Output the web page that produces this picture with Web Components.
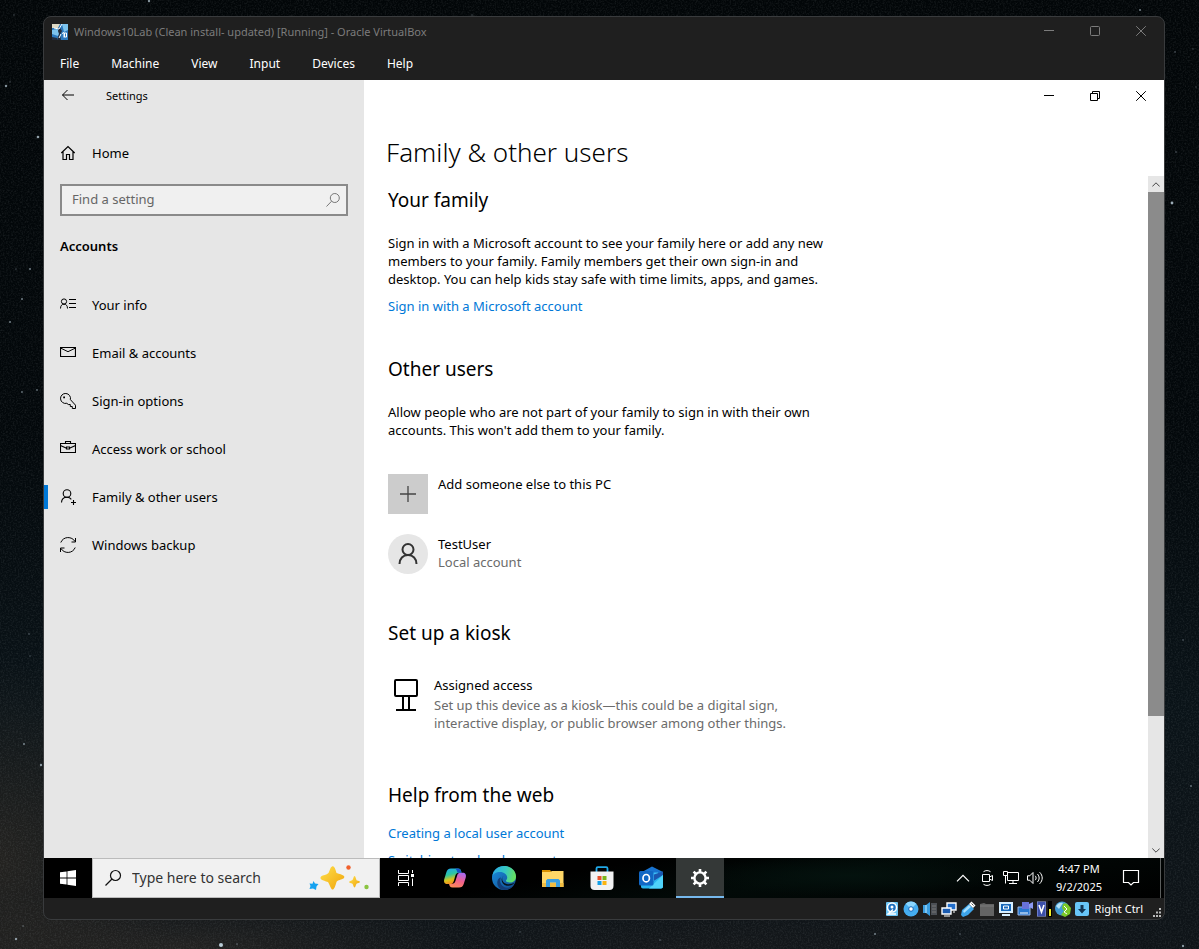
<!DOCTYPE html>
<html lang="en">
<head>
<meta charset="utf-8">
<meta name="viewport" content="width=device-width, initial-scale=1">
<title>Windows10Lab - Oracle VirtualBox</title>
<style>
  html, body { margin: 0; height: 100%; }
  body { font: 13px/18px "Noto Sans", "Open Sans", sans-serif; color: #000; background: #05090c; overflow: hidden; }
</style>
</head>
<body>
<host-desktop>
  <vm-window caption="Windows10Lab (Clean install- updated) [Running] - Oracle VirtualBox">
    <menu-strip slot="menu" items="File,Machine,View,Input,Devices,Help"></menu-strip>
    <settings-app>
      <nav-item slot="home" icon="home">Home</nav-item>
      <nav-item slot="nav" icon="info">Your info</nav-item>
      <nav-item slot="nav" icon="mail">Email &amp; accounts</nav-item>
      <nav-item slot="nav" icon="key">Sign-in options</nav-item>
      <nav-item slot="nav" icon="case">Access work or school</nav-item>
      <nav-item slot="nav" icon="family" current>Family &amp; other users</nav-item>
      <nav-item slot="nav" icon="sync">Windows backup</nav-item>

      <settings-group heading="Your family">
        <settings-note>Sign in with a Microsoft account to see your family here or add any new members to your family. Family members get their own sign-in and desktop. You can help kids stay safe with time limits, apps, and games.</settings-note>
        <settings-link>Sign in with a Microsoft account</settings-link>
      </settings-group>
      <settings-group heading="Other users">
        <settings-note>Allow people who are not part of your family to sign in with their own accounts. This won't add them to your family.</settings-note>
        <account-list>
          <account-entry kind="add" icon="plus">Add someone else to this PC</account-entry>
          <account-entry kind="user" icon="person">TestUser<span slot="detail">Local account</span></account-entry>
        </account-list>
      </settings-group>
      <settings-group heading="Set up a kiosk">
        <account-entry kind="kiosk" icon="kiosk">Assigned access<span slot="detail">Set up this device as a kiosk—this could be a digital sign, interactive display, or public browser among other things.</span></account-entry>
      </settings-group>
      <settings-group heading="Help from the web" compact>
        <settings-link>Creating a local user account</settings-link>
        <settings-link>Switching to a local account</settings-link>
      </settings-group>
    </settings-app>
    <task-bar>
      <task-button icon="taskview" label="Task View"></task-button>
      <task-button icon="copilot" label="Copilot"></task-button>
      <task-button icon="edge" label="Microsoft Edge"></task-button>
      <task-button icon="files" label="File Explorer"></task-button>
      <task-button icon="store" label="Microsoft Store"></task-button>
      <task-button icon="outlook" label="Outlook"></task-button>
      <task-button icon="gear" label="Settings" active></task-button>
    </task-bar>
    <vm-status slot="status"></vm-status>
  </vm-window>
</host-desktop>

<script>
const S = 'fill="none" stroke="currentColor"';
const ICONS = {
  min: [10, 10, `<path d="M0 4.500h10" ${S}/>`],
  max: [10, 10, `<rect x=".5" y=".5" width="9" height="9" rx="1" ${S}/>`],
  restore: [10, 10, `<path d="M.5 2.500h7v7h-7zM2.500 2.500v-2h7v7h-2" ${S}/>`],
  close: [10, 10, `<path d="M.2.2l9.600 9.600M9.800.2L.2 9.800" ${S}/>`],
  back: [14, 12, `<path d="M13 6H1.500M6.500 1L1.500 6l5 5" ${S}/>`],
  home: [16, 16, `<path d="M1.300 8L8 1.500 14.700 8M3 6.800v7.700h3.500v-5h3v5H13V6.800" ${S} stroke-width="1.200"/>`],
  search: [16, 16, `<circle cx="9.800" cy="6" r="4.500" ${S}/><path d="M6.600 9.200L1.500 14.500" ${S}/>`],
  lens: [18, 18, `<circle cx="11.500" cy="6.500" r="5" ${S} stroke-width="1.200"/><path d="M8 10L1.500 16.500" ${S} stroke-width="1.200"/>`],
  info: [16, 16, `<circle cx="4" cy="4.500" r="2.600" ${S}/><path d="M.5 11.500c0-3 1.500-4.300 3.500-4.300s3.500 1.300 3.500 4.300M9 2.500h7M9 6.500h7M9 10.500h7" ${S}/>`],
  mail: [16, 16, `<path d="M.5 2.500h15v9H.5z" ${S} stroke-width="1.200"/><path d="M.5 3L8 6.700 15.500 3" ${S}/>`],
  key: [16, 16, `<path d="M6.800 10.300A5 5 0 1 1 10.400 6.600l5.100 5.600v3.300h-3.200v-2h-2v-2H8.300l-1.500-1.200z" ${S}/><path d="M3.200 3.500h1.800v1.800h-1.800z" fill="currentColor"/>`],
  case: [16, 16, `<path d="M.5 2.500h15v9H.5zM5.500 2.500v-2h5v2M.5 4.500L6 7M15.500 4.500L10 7M6.500 6h3v2h-3z" ${S} stroke-width="1.100"/>`],
  family: [16, 16, `<circle cx="7" cy="4.500" r="3.800" ${S} stroke-width="1.100"/><path d="M1.500 13.500c.1-3.200 2.300-5.200 5.500-5.200 1.800 0 3.400.8 4.300 2M13.500 11v5M11 13.500h5" ${S} stroke-width="1.100"/>`],
  sync: [16, 16, `<path d="M.8 5.500C3.300-.9 12-.9 15 4.500M15.500 1v4h-4M15.200 10.500C12.700 16.900 4 16.900 1 11.500M.5 15v-4h4" ${S}/>`],
  plus: [16, 16, `<path d="M8 0v16M0 8h16" fill="none" stroke="#444" stroke-width="1.300"/>`],
  person: [20, 22, `<circle cx="10" cy="6.500" r="5.500" fill="none" stroke="#333" stroke-width="2"/><path d="M1.500 21c0-5.500 3.500-9 8.500-9s8.500 3.500 8.500 9" fill="none" stroke="#333" stroke-width="2"/>`],
  kiosk: [24, 32, `<rect x="1" y="1" width="22" height="16" rx="1" ${S} stroke-width="2"/><path d="M9 17v14M15 17v14M2 31h20" ${S} stroke-width="2"/>`],
  up: [8, 5, `<path d="M.3 4.500L4 .8l3.700 3.700" ${S}/>`],
  down: [8, 5, `<path d="M.3.5L4 4.200 7.700.5" ${S}/>`],
  start: [16, 16, `<path fill="#fff" d="M0 2.300L6.600 1.400v6.200H0zM7.400 1.300L16 0v7.600H7.400zM0 8.400h6.600v6.200L0 13.700zM7.400 8.400H16V16l-8.600-1.300z"/>`],
  sparkle: [62, 28, `<defs><linearGradient id="s" x1="0" y1="0" x2="1" y2="1"><stop stop-color="#ffe04a"/><stop offset="1" stop-color="#f0a30a"/></linearGradient></defs><path fill="url(#s)" d="M24 2.500c2-1 3 1 4.500 6.500 6.500 2 9.500 3 7 5.500-1.500 1-6 1.500-7 3.500-1.500 5.500-3 9-5 7-1.500-2-2-5-3.500-7-5.500-1.500-9-3-7-5.500 2-1.500 5.500-1.500 7.500-3.500 1.500-2.500 1.500-5.500 3.500-6.500z"/><path fill="url(#s)" d="M46.500 12c1 0 1.500 3 2 4.200 2 .7 3.500 1 3.500 1.800s-2.500 1-3.500 1.800c-1 1.700-1 3.700-2 3.700s-1.200-2.500-2-3.700c-1.500-.8-3.500-1-3.500-1.800s2.500-1 3.500-2c1-1.500 1-4 2-4z"/><path fill="#16a2f0" d="M5.500 17l1.500 2.500 3.500.5-2 2.500-.5 3.500-3-1.500-3.500.5 1-3-1-2.500 3 .2z"/><circle cx="40.500" cy="3.500" r="2.200" fill="#f1602c"/><circle cx="58.500" cy="23" r="2.200" fill="#8ac441"/>`],
  taskview: [18, 16, `<path d="M1.500 0v3.500h10V0M1.500 16v-3.500h10V16M1.500 5.500h10v5h-10zM15.500 0v3M15.500 8.500V16" fill="none" stroke="#fff"/><path fill="#fff" d="M14 4h3v3h-3z"/>`],
  copilot: [24, 24, `<defs><linearGradient id="a" x1="0" y1="0" x2=".3" y2="1"><stop stop-color="#1fa6f5"/><stop offset=".45" stop-color="#2ec6a0"/><stop offset=".75" stop-color="#d8c51c"/><stop offset="1" stop-color="#f58b1f"/></linearGradient><linearGradient id="b" x1=".7" y1="0" x2=".3" y2="1"><stop stop-color="#a869f2"/><stop offset=".5" stop-color="#f0608e"/><stop offset="1" stop-color="#fd8a57"/></linearGradient></defs><path d="M16 21.500H9.500c-2.500 0-3-1.500-3.500-3.700h3c2 0 3-1 3.500-3L14 10c.6-2.200 1.500-3.300 3.500-3.300h2c3 0 4 2 3.200 5l-2 6.300c-.7 2.500-2.200 3.500-4.700 3.500z" fill="url(#b)"/><path d="M8 2.500h7c2.500 0 3 1.500 3.500 4.200H16c-2 0-3.200 1-3.700 3l-1.500 5.300C10 17.500 9 18 7 18H4.500C1.500 18 .5 16 1.300 13l2-6.500C4 4 5.500 2.500 8 2.500z" fill="url(#a)"/><path d="M14 2.500c2.800 0 4 1 4.500 4.200h-4c-.7-1.700-1-4.200-3-4.200z" fill="#1353c7"/>`],
  edge: [24, 24, `<defs><linearGradient id="c" x1="0" y1=".2" x2="1" y2=".4"><stop stop-color="#2aa9e6"/><stop offset=".55" stop-color="#36c8c2"/><stop offset="1" stop-color="#66e060"/></linearGradient><linearGradient id="d" x1="0" y1="0" x2="1" y2="1"><stop stop-color="#1a8fe0"/><stop offset="1" stop-color="#114a8b"/></linearGradient></defs><circle cx="12" cy="12" r="12" fill="url(#d)"/><path d="M.2 10.500C1.200 4 6 0 12 0c7 0 12 5 12 10.500 0 4-3 6-6 6-2.700 0-4.300-1-4-2 .2-.6 1.200-1.200 1.200-3C15.200 8.500 12 6 8 6S1 8 .2 10.500z" fill="url(#c)"/><path d="M9 11.500c-2 4 0 9 4.800 10 3.700.8 6.700-.8 8.600-3.200C20 22.500 16 24 12.500 24 7 24 4.500 19 5.500 15c.6-2.300 2-3.300 3.500-3.500z" fill="#143e78"/><path d="M11.500 10c-2.500 2-1.500 7 3.300 8 3 .6 5.400-.2 7.700-1.500-1.500 2.500-4.500 3.800-7.700 3.200C9.500 18.700 8 13 11.500 10z" fill="#08131c"/>`],
  files: [24, 24, `<path d="M1 4h8l2 2.500H1z" fill="#d99100"/><path d="M1 6h8.500l1.500-1h11.500V21H1z" fill="#ffd767"/><path d="M1 17h21.500v4H1z" fill="#f2bd42"/><path d="M5 14.500L6.500 13h11l1.500 1.500V21h-4v-4.500H9V21H5z" fill="#3a9fe2"/>`],
  store: [24, 24, `<path d="M6.500 7V2.500C6.500 1.700 7 1.200 7.800 1.200h8.400c.8 0 1.300.5 1.300 1.300V7" fill="none" stroke="#20a9e8" stroke-width="1.800"/><path d="M.5 5.500h23V20c0 2.500-1.500 4-4 4h-15c-2.500 0-4-1.500-4-4z" fill="#f2f2f2"/><path d="M7.500 10h4v4h-4z" fill="#e8502a"/><path d="M12.500 10h4v4h-4z" fill="#7bb61a"/><path d="M7.500 15h4v4h-4z" fill="#13a0e8"/><path d="M12.500 15h4v4h-4z" fill="#fbb40f"/>`],
  outlook: [24, 24, `<path d="M3 6l10-5.500L24 6v4H3z" fill="#1873cf"/><path d="M5 6.500h14V15H5z" fill="#3dbdf5"/><path d="M15 8.500l9-3v8l-9 4z" fill="#1b57b0"/><path d="M2 10.500l11 5.500 11-7v11.500c0 1.200-.8 2-2 2H4c-1.200 0-2-.8-2-2z" fill="#28b4ee"/><path d="M10 22.500L24 9v11.500c0 1.200-.8 2-2 2z" fill="#4fd3fa"/><rect y="5" width="14.500" height="14.500" rx="1.500" fill="#1167c4"/><ellipse cx="7.200" cy="12.200" rx="3.200" ry="3.700" fill="none" stroke="#fff" stroke-width="1.700"/>`],
  gear: [20, 20, `<circle cx="10" cy="10" r="5.600" fill="none" stroke="#fff" stroke-width="2.400"/><path d="M10 1v3.500M10 15.500V19M1 10h3.500M15.500 10H19M3.600 3.600l2.600 2.600M13.800 13.800l2.600 2.600M16.400 3.600l-2.600 2.600M6.200 13.800l-2.600 2.600" stroke="#fff" stroke-width="2.600"/>`],
  chevron: [14, 8, `<path d="M1 7.300L7 1.300l6 6" fill="none" stroke="#fff" stroke-width="1.200"/>`],
  meet: [12, 16, `<path d="M1.500 4.500h7v7h-7zM8.500 7l3-1.500v5l-3-1.500M2.500 1.700c2-1.500 5-1.500 7 0M2.500 14.300c2 1.500 5 1.500 7 0" fill="none" stroke="#fff"/>`],
  network: [16, 14, `<path d="M4.500 1.500h11v8h-11zM10 9.500v3M6 12.500h8" fill="none" stroke="#fff"/><path d="M.5.5h4v4h-4zM2.500 4.500v8" fill="#000" stroke="#fff"/>`],
  sound: [18, 14, `<path d="M1.500 4.800h2.300L7 1.500v11L3.800 9.200H1.500zM9.200 4.800c1.200 1.300 1.200 3.100 0 4.400M11.400 3c2.300 2.400 2.300 5.600 0 8M13.600 1.200c3.500 3.500 3.500 8.100 0 11.600" fill="none" stroke="#fff"/>`],
  note: [18, 18, `<path d="M1.500 1.500h15v12h-5L9 16l-2.500-2.500h-5z" fill="none" stroke="#fff" stroke-width="1.200"/>`],
  vm: [16, 16, `<path fill="#2b78bd" d="M0 0h16v16H0z"/><path fill="#7cc4ee" d="M0 6l5-1 3 3-2 4-6-2zM10 0h6v6l-4 2z"/><path fill="#ddd8c4" d="M0 0h8L6 4H0z"/><path fill="#222d3c" d="M8 4l2 3-2 4 1 5H5l2-6-1-3 1-4zM0 13l5 1v2H0z"/><path fill="none" stroke="#fff" d="M10 0L7 5l-5-1M9 10l-2 4M10 9.500l2-1v5M12.500 9h2v4h-2z"/>`],
  disk: [16, 16, `<rect x="2" y="1" width="12" height="14" rx="1" fill="#6cc5f5"/><circle cx="8" cy="6.500" r="4.500" fill="#1c6fbe" stroke="#fff" stroke-width="1.500"/><circle cx="8" cy="6" r="1.500" fill="#fff"/><path d="M9 8.500L4 13h8" fill="none" stroke="#fff" stroke-width="1.500"/>`],
  disc: [16, 16, `<circle cx="8" cy="8" r="7.500" fill="#45adf0"/><path d="M8 8L2.700 2.700a7.500 7.500 0 0 1 10.600 0z" fill="#8bd6ff"/><circle cx="8" cy="8" r="2.300" fill="#fff" stroke="#1667b8"/>`],
  audio: [16, 16, `<path d="M1 4h3l4-3v14l-4-3H1z" fill="#3a9de0"/><path d="M4 4v8" stroke="#c1ebff"/><path d="M9 2h6v12H9z" fill="#4b4f55"/><path d="M10 5h4M10 8h4M10 11h4" stroke="#777"/>`],
  net: [16, 16, `<path d="M6 2h9v7H6z" fill="#226ecb" stroke="#fff" stroke-width="1.400"/><path d="M1 7h9v6H1z" fill="#1c5cb0" stroke="#fff" stroke-width="1.400"/><path d="M3 15h6M13 10v2" stroke="#fff"/>`],
  usb: [16, 16, `<path d="M2 9l7-6 5 5-6 6-5 2-2-2z" fill="#3da4e9"/><path d="M3 10l6-6 2 2-7 6z" fill="#a7e0ff"/><path d="M9 3l2.500-2.500 4 4L13 7z" fill="#fff"/><path d="M11.500 2.500l2 2" stroke="#555"/>`],
  folder: [16, 16, `<path d="M1 3l4-1 2 1h8v12H1z" fill="#646464"/><path d="M1 5h14" stroke="#7b7b7b"/>`],
  display: [16, 16, `<path d="M2 2h12v9H2z" fill="#1768ba" stroke="#d8efff" stroke-width="2"/><path d="M5.500 5h5v3h-5z" fill="#176abf" stroke="#fff"/><path d="M4 14h8" stroke="#d8efff" stroke-width="2"/>`],
  record: [16, 16, `<path d="M1 6h12v8H1z" fill="#2878cf" stroke="#9bb8e8"/><path d="M5 1h7v7H5z" fill="#6872d8"/><path d="M12 3l4-2v7l-4-2z" fill="#8d9af0"/><path d="M3 12h8" stroke="#fff"/>`],
  cpu: [16, 16, `<path d="M1 1h9v14H1z" fill="#3c50a9"/><path d="M1.500.5h8v15h-8z" fill="none" stroke="#9aa7ec" stroke-dasharray="1 1"/><path d="M3 4l2.500 7L8 4" fill="none" stroke="#fff" stroke-width="1.600"/><path d="M12 0h4v16h-4z" fill="#000"/><path d="M13 8h2v7h-2z" fill="#f3ec28"/>`],
  globe: [16, 16, `<circle cx="7" cy="7.500" r="7" fill="#429bd4"/><path d="M1 5c2-3 5-4 7-3L4 8z" fill="#b5e2f7"/><path d="M8 3c4-2 5 1 8 4l-1 6-5 3-4-2 3-4-2-3z" fill="#7bc927"/><path d="M9 5l3 3-3 3 3 2" fill="none" stroke="#fff"/>`],
  hostkey: [16, 16, `<rect x="1" y="1" width="14" height="14" rx="2" fill="#68c5f7"/><path d="M6.500 4h3v4H12l-4 4.500L4 8h2.500z" fill="#123554"/>`],
  grip: [9, 9, `<path d="M7 0h2v2H7zM4 3.500h2v2H4zM7 3.500h2v2H7zM1 7h2v2H1zM4 7h2v2H4zM7 7h2v2H7z" fill="#bbb"/>`]
};

const define = (name, html, setup) => {
  const template = document.createElement('template');
  template.innerHTML = html;
  customElements.define(name, class extends HTMLElement {
    connectedCallback() {
      if (this.shadowRoot) return;
      const root = this.attachShadow({ mode: 'open' });
      root.append(template.content.cloneNode(true));
      setup?.(this, root);
    }
  });
};

/* Night-sky wallpaper: a dark gradient, film grain and scattered stars. */
define('host-desktop', `<style>
  :host{display:flex;box-sizing:border-box;height:100vh;padding:16px 34px 29px 43px;position:relative;
    background:radial-gradient(ellipse 180px 200px at 0 860px,#332d2699,transparent),radial-gradient(ellipse 300px 60px at 180px 100%,#302c2899,transparent),radial-gradient(ellipse 260px 50px at 700px 100%,#2422224d,transparent),linear-gradient(#020608,#03080b 45%,#0a1318 75%,#0f1418)}
  .sky{position:absolute;inset:0;width:100%;height:100%}
  ::slotted(*){position:relative;flex:1}
</style><svg class="sky" aria-hidden="true"><filter id="g"><feTurbulence type="fractalNoise" baseFrequency=".6" numOctaves="2" seed="4"/><feColorMatrix values="0 0 0 0 .6  0 0 0 0 .66  0 0 0 0 .68  1.200 0 0 0 -.5"/></filter><rect width="100%" height="100%" filter="url(#g)" opacity=".18"/><g id="stars"></g></svg><slot></slot>`, (el, root) => {
  const stars = [[6,86,1.2],[10,82,.7],[38,137,1.3],[30,269,1],[16,269,.7],[22,299,1],[10,322,1],[22,392,.9],[37,390,.9],[14,15,.7],[29,634,.8],[30,656,.7],[24,744,1],[41,765,1.2],[16,939,1.2],[23,926,.8],[221,945,2],[237,944,.8],[149,1,1.2],[1140,10,1],[1172,203,1.4],[1175,52,.8],[1193,49,.7],[1196,87,.7],[1176,152,.8],[1183,640,.8],[1191,786,.9],[875,934,1],[960,934,.8],[1183,946,1.2],[472,15,.7],[660,940,.8],[520,932,.7]];
  root.querySelector('#stars').innerHTML = stars.map(([x, y, r]) => `<circle cx="${x}" cy="${y}" r="${r}" fill="#b9cbd6" opacity="${Math.min(1, r * .6)}"/>`).join('');
});

define('caption-buttons', `<style>
  :host{display:flex;height:32px}
  button{width:46px;border:0;padding:0;background:none;color:inherit;display:flex;align-items:center;justify-content:center}
</style><button aria-label="Minimize"><ui-icon name="min"></ui-icon></button><button class="mid" aria-label="Restore"></button><button aria-label="Close"><ui-icon name="close"></ui-icon></button>`, (el, root) => {
  root.querySelector('.mid').innerHTML = `<ui-icon name="${el.hasAttribute('maximize') ? 'max' : 'restore'}"></ui-icon>`;
});

define('vm-window', `<style>
  :host{display:flex;flex-direction:column;box-sizing:border-box;min-width:0;border:1px solid #393b3d;border-radius:8px;background:#1f1f1f;overflow:hidden}
  header{display:flex;align-items:center;height:30px;padding-left:8px;gap:6px;color:#7c7c7c;font-size:11px}
  header caption-buttons{margin-left:auto;height:28px;align-self:flex-start}
  .screen{flex:1;min-height:0;display:flex;flex-direction:column}
</style><header><ui-icon name="vm"></ui-icon><span class="caption"></span><caption-buttons maximize></caption-buttons></header><slot name="menu"></slot><div class="screen"><slot></slot></div><slot name="status"></slot>`, (el, root) => {
  root.querySelector('.caption').textContent = el.getAttribute('caption');
});

define('menu-strip', `<style>
  :host{display:flex;height:33px;align-items:center;color:#fff}
  button{font:inherit;font-size:12px;color:inherit;background:none;border:0;padding:0 16px;line-height:32px}
</style>`, (el, root) => {
  for (const item of el.getAttribute('items').split(',')) {
    const b = document.createElement('button');
    b.textContent = item;
    root.append(b);
  }
});

define('settings-app', `<style>
  :host{display:flex;flex:1;min-height:0;background:#fff}
  aside{width:320px;flex:none;background:#e6e6e6;display:flex;flex-direction:column}
  .top{display:flex;align-items:center;height:32px;font-size:11px}
  .back{width:48px;height:32px;border:0;background:none;padding:0;color:#000}
  .top span{padding-left:14px}
  .home{margin-top:17px}
  .find{margin:7px 16px 0;height:28px;border:2px solid #8a8a8a;background:#f0f0f0;display:flex;align-items:center;color:#777;padding-right:5px}
  input{flex:1;min-width:0;border:0;background:none;outline:0;font:inherit;padding:0 10px 2px}
  input::placeholder{color:#666;opacity:1}
  h2{font-size:13px;line-height:24px;font-weight:600;margin:18px 16px 23px}
  main{flex:1;min-width:0;display:flex;flex-direction:column}
  .bar{align-self:flex-end}
  h1{font-size:26px;line-height:36px;font-weight:300;margin:22px 22px 6px}
  .view{flex:1;min-height:0;display:flex}
  .page{flex:1;overflow:hidden;padding:10px 24px 0}
  .scroll{width:16px;display:flex;flex-direction:column;background:#e6e6e6}
  .scroll button{height:16px;border:0;padding:0;background:none;color:#444;display:flex;align-items:center;justify-content:center}
  .track{flex:1;display:grid;grid-template-rows:524fr 126fr}
  .thumb{background:#8b8b8b}
</style><aside>
  <div class="top"><button class="back" aria-label="Back"><ui-icon name="back"></ui-icon></button><span>Settings</span></div>
  <div class="home"><slot name="home"></slot></div>
  <label class="find"><input type="text" placeholder="Find a setting" aria-label="Find a setting"><ui-icon name="search"></ui-icon></label>
  <h2>Accounts</h2><nav><slot name="nav"></slot></nav>
</aside><main><caption-buttons class="bar"></caption-buttons><h1>Family &amp; other users</h1>
<div class="view"><div class="page"><slot></slot></div><div class="scroll"><button aria-label="Scroll up"><ui-icon name="up"></ui-icon></button><div class="track"><div class="thumb"></div></div><button aria-label="Scroll down"><ui-icon name="down"></ui-icon></button></div></div></main>`);

define('nav-item', `<style>
  :host{display:block}
  a{display:flex;align-items:center;height:48px;gap:16px;color:#000;text-decoration:none}
  a::before{content:"";width:4px;height:24px;margin-right:-4px}
  :host([current]) a::before{background:#0078d7}
</style><a href="#"><ui-icon></ui-icon><span><slot></slot></span></a>`, (el, root) => {
  root.querySelector('ui-icon').setAttribute('name', el.getAttribute('icon'));
});

define('settings-group', `<style>
  :host{display:flex;flex-direction:column;margin-bottom:40px}
  h2{font-size:19px;line-height:28px;font-weight:400;margin:0 0 20px}
  :host([compact]) h2{margin-bottom:6px}
</style><h2></h2><slot></slot>`, (el, root) => {
  root.querySelector('h2').textContent = el.getAttribute('heading');
});

define('settings-note', `<style>:host{display:block;max-width:450px}p{margin:0}</style><p><slot></slot></p>`);
define('settings-link', `<style>:host{display:block;margin-top:9px}a{color:#0078d7;text-decoration:none}</style><a href="#"><slot></slot></a>`);
define('account-list', `<style>:host{display:flex;flex-direction:column;gap:20px;margin:35px 0 5px}</style><slot></slot>`);

define('account-entry', `<style>
  :host{display:block}
  button{display:flex;gap:10px;border:0;padding:0;background:none;font:inherit;color:inherit;text-align:left}
  .pic{width:40px;height:40px;flex:none;display:flex;align-items:center;justify-content:center}
  .text{display:flex;flex-direction:column;padding-top:1px;max-width:370px}
  ::slotted([slot=detail]){color:#6b6b6b}
  :host([kind=add]) .pic{background:#ccc}
  :host([kind=user]) .pic{background:#e6e6e6;border-radius:50%}
  :host([kind=kiosk]){margin:8px 0 9px}
  :host([kind=kiosk]) .pic{width:36px}
  :host([kind=kiosk]) .text{gap:2px}
</style><button><span class="pic"><ui-icon></ui-icon></span><span class="text"><span><slot></slot></span><slot name="detail"></slot></span></button>`, (el, root) => {
  root.querySelector('ui-icon').setAttribute('name', el.getAttribute('icon'));
});

define('task-button', `<style>
  :host{display:block}
  button{width:48px;height:40px;box-sizing:border-box;border:0;padding:0;background:none;display:flex;align-items:center;justify-content:center}
  :host([active]) button{background:#343837;border-bottom:2px solid #76b9ed;padding-top:2px}
</style><button><ui-icon></ui-icon></button>`, (el, root) => {
  root.querySelector('ui-icon').setAttribute('name', el.getAttribute('icon'));
  root.querySelector('button').setAttribute('aria-label', el.getAttribute('label'));
});

define('task-bar', `<style>
  :host{display:flex;height:40px;flex:none;color:#fff;background:radial-gradient(ellipse 160px 20px at 72% 45%,#04120e,transparent),linear-gradient(170deg,#000 45%,#020a08 65%,#000)}
  button{border:0;padding:0;background:none;color:inherit;display:flex;align-items:center;justify-content:center}
  .start{width:48px;background:#000}
  .find{width:288px;box-sizing:border-box;border:1px solid #bbb;background:#f1f1f1;color:#111;display:flex;align-items:center;gap:10px;padding:0 9px 0 11px}
  input{flex:1;min-width:0;border:0;padding:0;background:none;outline:0;font:inherit;font-size:14px}
  input::placeholder{color:#333;opacity:1}
  .apps{display:flex;gap:1px;margin-left:2px}
  .tray{margin-left:auto;display:flex}
  .tray button{width:24px}
  .tray .clock{width:64px;flex-direction:column;font:inherit;font-size:11px}
  .tray .note{width:40px}
  .tray .show{width:4px;border-left:1px solid #5b5e5d;margin-left:9px}
</style><button class="start" aria-label="Start"><ui-icon name="start"></ui-icon></button>
<label class="find"><ui-icon name="lens"></ui-icon><input type="text" placeholder="Type here to search" aria-label="Type here to search"><ui-icon name="sparkle"></ui-icon></label>
<div class="apps"><slot></slot></div>
<div class="tray"><button aria-label="Show hidden icons"><ui-icon name="chevron"></ui-icon></button><button aria-label="Meet Now"><ui-icon name="meet"></ui-icon></button><button aria-label="Network"><ui-icon name="network"></ui-icon></button><button aria-label="Volume"><ui-icon name="sound"></ui-icon></button><button class="clock"><span>4:47 PM</span><span>9/2/2025</span></button><button class="note" aria-label="Notifications"><ui-icon name="note"></ui-icon></button><button class="show" aria-label="Show desktop"></button></div>`);

define('vm-status', `<style>
  :host{display:flex;height:21px;flex:none;align-items:center;justify-content:flex-end;gap:3px;color:#fff;font-size:11px;padding-right:3px}
  span{margin-left:2px}
  .grip{margin:8px 0 0 6px}
</style>`, (el, root) => {
  for (const n of ['disk','disc','audio','net','usb','folder','display','record','cpu','globe','hostkey']) {
    const i = document.createElement('ui-icon');
    i.setAttribute('name', n);
    root.append(i);
  }
  const t = document.createElement('span');
  t.textContent = 'Right Ctrl';
  const g = document.createElement('ui-icon');
  g.setAttribute('name', 'grip');
  g.className = 'grip';
  root.append(t, g);
});

/* Registered last, once every owner has chosen its icon's name. */
define('ui-icon', `<style>:host{display:inline-flex;flex:none;align-items:center;justify-content:center}svg{display:block}</style>`, (el, root) => {
  const [w, h, body] = ICONS[el.getAttribute('name')];
  const box = document.createElement('template');
  box.innerHTML = `<svg width="${w}" height="${h}" viewBox="0 0 ${w} ${h}" aria-hidden="true">${body}</svg>`;
  root.append(box.content);
});
</script>
</body>
</html>
